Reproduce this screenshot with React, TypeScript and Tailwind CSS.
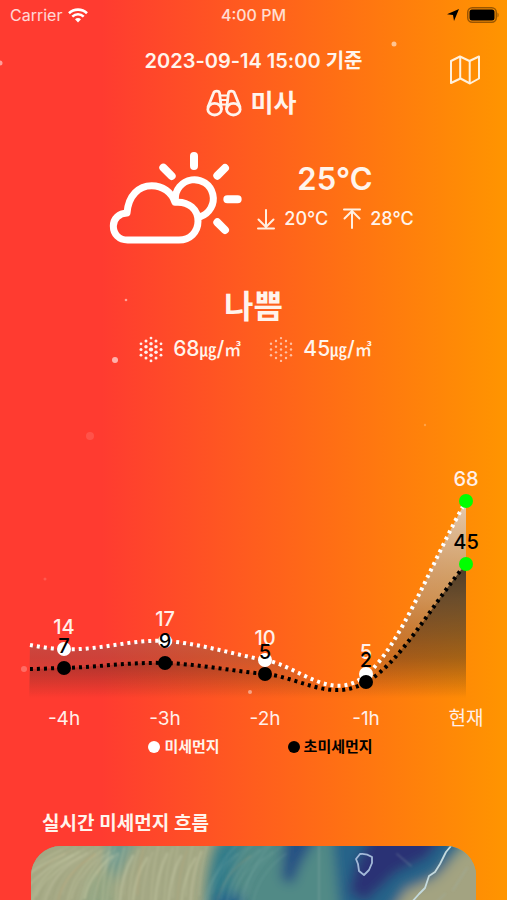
import type { ReactNode } from "react";

interface ChartPoint {
    label: string;
    x: number;
    pm10: number;
    pm10Y: number;
    pm25: number;
    pm25Y: number;
}

interface DustValueProps {
    value: number;
    strong?: boolean;
}

interface TempProps {
    icon: ReactNode;
    value: string;
}

const POINTS: ChartPoint[] = [
    { label: "-4h", x: 64, pm10: 14, pm10Y: 188, pm25: 7, pm25Y: 207 },
    { label: "-3h", x: 165, pm10: 17, pm10Y: 180, pm25: 9, pm25Y: 202 },
    { label: "-2h", x: 265, pm10: 10, pm10Y: 199, pm25: 5, pm25Y: 213 },
    { label: "-1h", x: 366, pm10: 5, pm10Y: 213, pm25: 2, pm25Y: 221 },
    { label: "현재", x: 466, pm10: 68, pm10Y: 40, pm25: 45, pm25Y: 103 },
];

const PM10_LINE = "M30 184C41 186 53 188 64 188C98 190 131 178 165 180C198 182 232 193 265 199C299 205 332 243 366 214C400 187 433 98 466 40";
const PM25_LINE = "M30 208C41 208 53 207 64 207C98 206 131 201 165 202C198 203 232 210 265 213C299 216 332 242 366 221C400 203 433 142 466 103";

const FLAKES = [
    { cx: 394, cy: 44, r: 2.5, opacity: 0.55 },
    { cx: 0, cy: 63, r: 2.5, opacity: 0.5 },
    { cx: 126, cy: 300, r: 1.3, opacity: 0.5 },
    { cx: 115, cy: 360, r: 3, opacity: 0.6 },
    { cx: 90, cy: 436, r: 4, opacity: 0.12 },
    { cx: 425, cy: 425, r: 1.2, opacity: 0.25 },
    { cx: 45, cy: 579, r: 1.5, opacity: 0.15 },
    { cx: 24, cy: 669, r: 3, opacity: 0.25 },
    { cx: 250, cy: 692, r: 2, opacity: 0.45 },
];

// dot columns of the hexagon, from left to right
const HEX_COLUMNS = [3, 4, 5, 4, 3];

// wind streaks of the flow map: start, bend and end of each stroke
const STREAKS = Array.from({ length: 58 }, (_, i) => {
    const jitter = (i * 37) % 11;
    const x = -30 + i * 4.4;
    const lean = i < 22 ? 58 - i * 1.6 : i < 46 ? 4 + jitter : 34;
    const top = i < 22 ? jitter : jitter * 2 - 8;
    const bottom = 64 - ((i * 23) % 17);
    return {
        d: `M${x} ${bottom}Q${x + lean * 0.15} ${20 + jitter} ${x + lean} ${top}`,
        opacity: i < 46 ? 0.08 + jitter * 0.035 : 0.18,
        width: 1.2 + (i % 4) * 0.5,
        color: i % 9 === 4 ? "#c9a878" : i < 46 ? "#d0d2ae" : "#86b3ac",
    };
});

function StatusBar() {
    return (
        <div className="grid grid-cols-3 items-center px-2 h-[30px] text-base">
            <div className="flex items-center gap-1.5 pl-0.5 text-white/80">
                <span>Carrier</span>
                <svg viewBox="0 0 20 15" className="w-5 h-[15px]" fill="none" stroke="white" strokeWidth="2.6">
                    <path d="M1 5.2C6 0.4 14 0.4 19 5.2" />
                    <path d="M4.3 8.6C7.6 5.5 12.4 5.5 15.7 8.6" />
                    <path d="M7 11.2C8.8 9.6 11.2 9.6 13 11.2L10 14.4Z" fill="white" stroke="none" />
                </svg>
            </div>
            <span className="text-center font-medium text-white/80">4:00 PM</span>
            <div className="flex items-center justify-end gap-2">
                <svg viewBox="0 0 12 12" className="w-3 h-3">
                    <path d="M0 5.2L12 0L7 12L6 6Z" fill="black" />
                </svg>
                <svg viewBox="0 0 32 16" className="w-8 h-4">
                    <rect x="0.75" y="0.75" width="28.5" height="14.5" rx="4.5" fill="none" stroke="black" strokeOpacity="0.4" strokeWidth="1.5" />
                    <rect x="2.5" y="2.5" width="25" height="11" rx="2.5" fill="black" />
                    <path d="M30.5 5.5C32 6.5 32 9.5 30.5 10.5Z" fill="black" fillOpacity="0.4" />
                </svg>
            </div>
        </div>
    )
}

function Binoculars() {
    return (
        <svg viewBox="0 0 36 28" className="w-9 h-7" fill="none" stroke="#fff4ec" strokeWidth="2.8" strokeLinecap="round" strokeLinejoin="round">
            <ellipse cx="8.6" cy="20.2" rx="6.8" ry="5.8" />
            <ellipse cx="27.4" cy="20.2" rx="6.8" ry="5.8" />
            <path d="M2 18L7.4 4.4C8.4 1.4 13.2 1.4 13.6 4.4L15.4 20" />
            <path d="M34 18L28.6 4.4C27.6 1.4 22.8 1.4 22.4 4.4L20.6 20" />
            <path d="M14 6.5H22M14.5 11H21.5M15 15.5H21" strokeWidth="2" />
        </svg>
    )
}

function PartlySunny() {
    return (
        <svg viewBox="30 32 399 282" className="w-[133px] h-[94px]" fill="none" stroke="white" strokeWidth="21" strokeLinecap="round" strokeLinejoin="round">
            <path d="M84 218C88 165 120 136 158 136C190 136 218 155 228 186C270 182 297 208 297 243C297 275 273 299 240 299H86C60 299 43 282 43 257C43 235 60 219 84 218Z" />
            <path d="M229 178A57 57 0 1 1 304 229" />
            <path d="M285 47V77M378 83L355 106M193 82L218 107M385 177H416M355 246L378 269" strokeWidth="24" />
        </svg>
    )
}

function Temp({ icon, value }: TempProps) {
    return (
        <div className="flex items-center gap-2">
            <svg viewBox="0 0 20 22" className="w-5 h-[22px]" fill="none" stroke="#fff0e2" strokeWidth="2" strokeLinecap="round" strokeLinejoin="round">
                {icon}
            </svg>
            <span>{value}</span>
        </div>
    )
}

function DustValue({ value, strong }: DustValueProps) {
    return (
        <div className="flex items-center gap-2.5">
            <svg viewBox="0 0 24 27" className="w-6 h-[27px]" fill="white" fillOpacity={strong ? 0.92 : 0.6}>
                {HEX_COLUMNS.map((count, col) =>
                    Array.from({ length: count }, (_, row) => {
                        const cx = 2 + col * 5;
                        const cy = 13.5 + (row - (count - 1) / 2) * 5.7;
                        const dist = Math.hypot(cx - 12, cy - 13.5);
                        return <circle key={`${col}-${row}`} cx={cx} cy={cy} r={strong ? 2.1 - dist * 0.06 : 1.2} />
                    })
                )}
            </svg>
            <span>
                {value}
                <span className="text-[17px]">㎍</span>/<span className="text-[17px]">㎥</span>
            </span>
        </div>
    )
}

function DustChart() {
    return (
        <svg viewBox="0 0 507 274" className="block w-full" fontSize="19">
            <defs>
                <linearGradient id="pm10" gradientUnits="userSpaceOnUse" x1="0" y1="40" x2="0" y2="236">
                    <stop offset="0" stopColor="#e0e0e8" stopOpacity="0.75" />
                    <stop offset="0.5" stopColor="#a0a0a0" stopOpacity="0.5" />
                    <stop offset="0.8" stopColor="#505050" stopOpacity="0.28" />
                    <stop offset="1" stopColor="#404040" stopOpacity="0" />
                </linearGradient>
                <linearGradient id="pm25" gradientUnits="userSpaceOnUse" x1="0" y1="103" x2="0" y2="238">
                    <stop offset="0" stopColor="black" stopOpacity="0.65" />
                    <stop offset="1" stopColor="black" stopOpacity="0" />
                </linearGradient>
            </defs>
            <path d={`${PM10_LINE}V240H29Z`} fill="url(#pm10)" />
            <path d={`${PM25_LINE}V240H29Z`} fill="url(#pm25)" />
            <path d={PM10_LINE} fill="none" stroke="white" strokeWidth="4" strokeDasharray="3 4" />
            {POINTS.map((p) => (
                <g key={p.label} textAnchor="middle" fill="#fff0ea">
                    <circle cx={p.x} cy={p.pm10Y} r="7" fill={p.label === "현재" ? "#00ff00" : "white"} />
                    <text x={p.x} y={p.pm10Y - 15} fontSize="20" fontWeight="500">{p.pm10}</text>
                    <text x={p.x} y="264">{p.label}</text>
                </g>
            ))}
            <path d={PM25_LINE} fill="none" stroke="black" strokeWidth="4" strokeDasharray="3 4" />
            {POINTS.map((p) => (
                <g key={p.label} textAnchor="middle" fill="black">
                    <circle cx={p.x} cy={p.pm25Y} r="7" fill={p.label === "현재" ? "#00ff00" : "black"} />
                    <text x={p.x} y={p.pm25Y - 15} fontSize="20" fontWeight="500">{p.pm25}</text>
                </g>
            ))}
        </svg>
    )
}

function FlowMap() {
    return (
        <div className="mx-[31px] h-[300px] rounded-[30px] overflow-hidden bg-[#8fa287]">
            <svg viewBox="0 0 445 300" preserveAspectRatio="xMidYMin slice" className="w-full h-full">
                <defs>
                    <filter id="soft" x="-30%" y="-30%" width="160%" height="160%">
                        <feGaussianBlur stdDeviation="6" />
                    </filter>
                    <filter id="thin">
                        <feGaussianBlur stdDeviation="0.8" />
                    </filter>
                </defs>
                <rect width="445" height="300" fill="#a3a783" />
                <g filter="url(#soft)">
                    <path d="M78 -20H112L98 8L84 36L74 20Z" fill="#6f9a8e" />
                    <path d="M60 30L80 20L86 90H40Z" fill="#92a482" />
                    <path d="M192 -20Q170 20 176 90H480V-20Z" fill="#518a86" />
                    <path d="M186 0Q172 35 178 90H218Q208 60 200 40Q200 20 214 -10Z" fill="#327b8a" />
                    <path d="M184 48H212V90H180Z" fill="#25648a" />
                    <path d="M254 -12H288L270 18L262 38L250 34Z" fill="#285184" />
                    <path d="M300 -20H440L412 24L375 52L340 90H312L306 40Z" fill="#286489" />
                    <path d="M345 -20H420L396 12L365 27L334 56L318 46L324 20Z" fill="#2a3175" />
                    <path d="M432 2L404 32L375 44L345 90H480V0Z" fill="#a3a381" />
                </g>
                <g filter="url(#thin)" fill="none" strokeWidth="1.5" strokeLinecap="round">
                    {STREAKS.map((s) => (
                        <path key={s.d} d={s.d} stroke={s.color} strokeOpacity={s.opacity} strokeWidth={s.width} />
                    ))}
                    <path d="M288 0V60M366 8L380 20M422 44L436 22M404 58L414 48" stroke="#9eb6b2" strokeOpacity="0.3" />
                </g>
                <path d="M420 0L415 6L409 18L404 26L398 30L394 42L388 48L380 57" fill="none" stroke="#c4dade" strokeWidth="1.8" strokeLinejoin="round" />
                <path d="M329 8Q335 7 341 11L341 17L338 24L333 29L328 25L327 18L325 13Z" fill="none" stroke="#a3b9d8" strokeWidth="1.8" strokeLinejoin="round" />
            </svg>
        </div>
    )
}

export default function App() {
    return (
        <div className="relative h-screen overflow-hidden bg-linear-to-r/srgb from-[#ff3b30] from-20% to-[#ff9500] text-[#fff4ec] font-['Inter','Noto_Sans_CJK_KR',sans-serif]">
            <svg viewBox="0 0 507 900" preserveAspectRatio="xMinYMin slice" className="absolute inset-0 w-full h-full pointer-events-none" fill="white">
                {FLAKES.map((f) => (
                    <circle key={f.cy} cx={f.cx} cy={f.cy} r={f.r} fillOpacity={f.opacity} />
                ))}
            </svg>

            <StatusBar />

            <header className="grid grid-cols-[1fr_auto_1fr] pt-[17px] px-6">
                <div />
                <div className="flex flex-col items-center gap-2">
                    <p className="text-xl leading-7 font-semibold">2023-09-14 15:00 기준</p>
                    <h1 className="flex items-center gap-2 pr-1 text-[25px] leading-10 font-semibold">
                        <Binoculars />
                        미사
                    </h1>
                </div>
                <button type="button" aria-label="지도" className="justify-self-end self-start mt-2 mr-0.5 cursor-pointer">
                    <svg viewBox="0 0 32 30" className="w-8 h-[30px]" fill="none" stroke="#fff0dc" strokeWidth="2" strokeLinejoin="round">
                        <path d="M2 6L11 1.5L20.5 6L30 1.5V23.5L21 28.5L11.5 23.5L2 28Z" />
                        <path d="M11.2 1.5V23.5M20.7 6V28.5" />
                    </svg>
                </button>
            </header>

            <section className="flex justify-center gap-3.5 pl-4 pt-7">
                <PartlySunny />
                <div className="flex flex-col items-center pt-2">
                    <p className="text-[31px] leading-10 font-semibold">25°C</p>
                    <div className="flex gap-3.5 pt-1 text-lg leading-8 font-medium">
                        <Temp value="20°C" icon={<path d="M10 2V19M2.5 11.5L10 19L17.5 11.5M2 20.5H18" />} />
                        <Temp value="28°C" icon={<path d="M10 20V3M2.5 10.5L10 3L17.5 10.5M2 1.5H18" />} />
                    </div>
                </div>
            </section>

            <section className="flex flex-col items-center pt-[38px]">
                <h2 className="text-[32px] leading-[48px] font-semibold">나쁨</h2>
                <div className="flex gap-7 pt-0.5 pl-1 text-[21px] leading-8 font-medium">
                    <DustValue value={68} strong />
                    <DustValue value={45} />
                </div>
            </section>

            <section className="pt-[95px]">
                <DustChart />
                <div className="flex justify-center gap-[68px] pl-3.5 text-[15px] leading-6 font-semibold">
                    <span className="flex items-center gap-1">
                        <span className="size-3 rounded-full bg-white" />
                        미세먼지
                    </span>
                    <span className="flex items-center gap-1 text-black">
                        <span className="size-3 rounded-full bg-black" />
                        초미세먼지
                    </span>
                </div>
            </section>

            <section className="pt-[51px]">
                <h3 className="pl-[42px] pb-2 text-[19px] leading-7 font-semibold">실시간 미세먼지 흐름</h3>
                <FlowMap />
            </section>
        </div>
    )
}
